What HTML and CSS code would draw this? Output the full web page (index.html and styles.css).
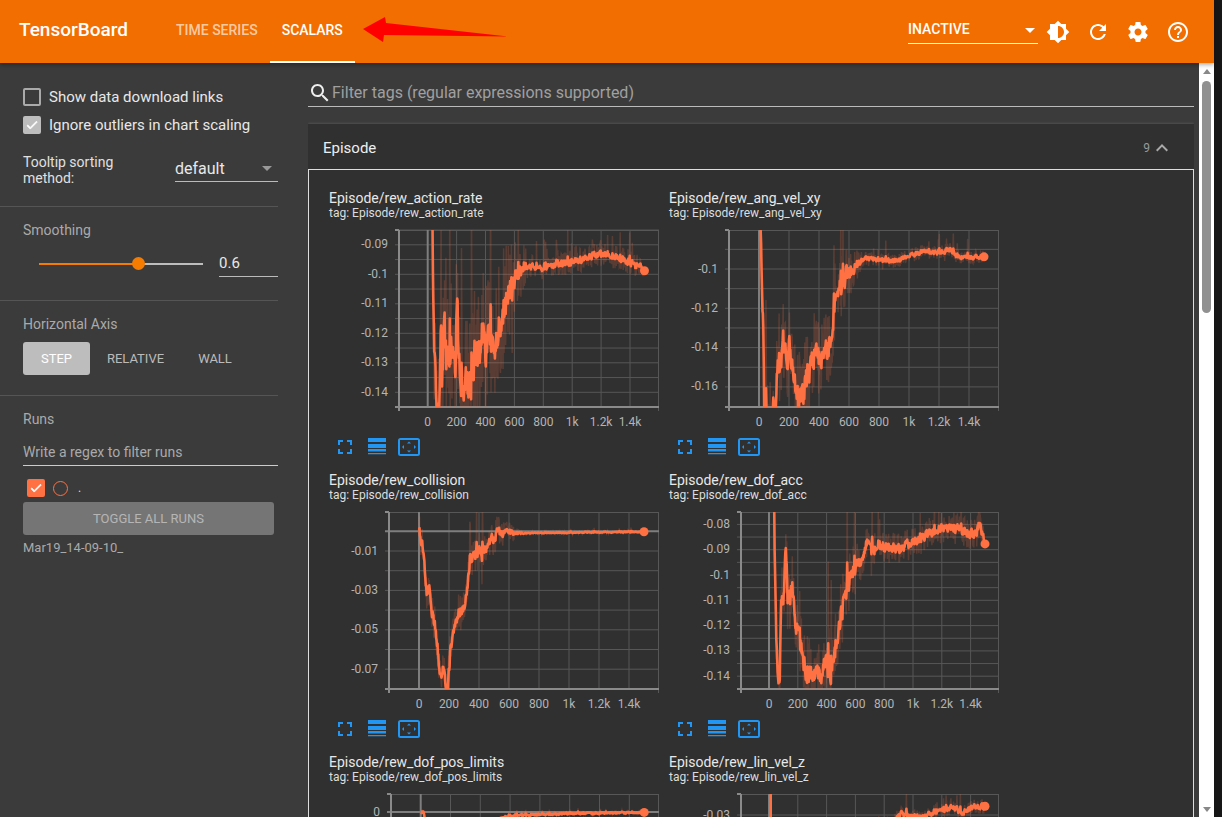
FILE: index.html
```html
<!DOCTYPE html>
<html lang="en">
<head>
<meta charset="utf-8">
<title>TensorBoard</title>
<link rel="stylesheet" href="styles.css">
</head>
<body>
<svg class="defs" width="0" height="0" aria-hidden="true">
  <symbol id="i-full" viewBox="0 0 24 24"><path d="M7 14H5v5h5v-2H7v-3zm-2-4h2V7h3V5H5v5zm12 7h-3v2h5v-5h-2v3zM14 5v2h3v3h2V5h-5z"/></symbol>
  <symbol id="i-lines" viewBox="0 0 18 18"><path d="M0 0h18v4H0zM0 6h18v4H0zM0 11h18v2.4H0zM0 15h18v1.2H0z"/></symbol>
  <symbol id="i-fit" viewBox="0 0 22 18"><path d="M2.5 0h17A2.5 2.5 0 0 1 22 2.5v13a2.5 2.5 0 0 1-2.5 2.5h-17A2.5 2.5 0 0 1 0 15.5v-13A2.5 2.5 0 0 1 2.5 0zM2 2v14h18V2zM11 3.5l2 2H9zM11 14.5l-2-2h4zM4 9l2-2v4zM18 9l-2 2V7z" fill-rule="evenodd"/></symbol>
  <symbol id="i-check" viewBox="0 0 24 24"><path d="M9 16.17L4.83 12l-1.42 1.41L9 19 21 7l-1.41-1.41z" stroke="currentColor" stroke-width="1.3"/></symbol>
</svg>
<div class="window">
  <div class="app">
    <header class="topbar">
      <div class="brand">TensorBoard</div>
      <nav class="tabs">
        <div class="tab">Time Series</div>
        <div class="tab tab-active">Scalars</div>
      </nav>
      <svg class="annotation" width="150" height="30" viewBox="0 0 150 30"><polygon points="0,12 22,0 23,6 145,19.5 21,18 20,25" fill="#fe0000"/></svg>
      <div class="topbar-right">
        <div class="reload-select"><span>INACTIVE</span><i class="caret caret-white"></i></div>
        <div class="top-icon"><svg viewBox="0 0 24 24"><path d="M20 15.31L23.31 12 20 8.69V4h-4.69L12 .69 8.69 4H4v4.69L.69 12 4 15.31V20h4.69L12 23.31 15.31 20H20v-4.69zM12 18V6c3.31 0 6 2.69 6 6s-2.69 6-6 6z"/></svg></div>
        <div class="top-icon"><svg viewBox="0 0 24 24"><path d="M17.65 6.35C16.2 4.9 14.21 4 12 4c-4.42 0-7.99 3.58-7.99 8s3.57 8 7.99 8c3.73 0 6.84-2.55 7.73-6h-2.08c-.82 2.33-3.04 4-5.65 4-3.31 0-6-2.69-6-6s2.69-6 6-6c1.66 0 3.14.69 4.22 1.78L13 11h7V4l-2.35 2.35z"/></svg></div>
        <div class="top-icon"><svg viewBox="0 0 24 24"><path d="M19.43 12.98c.04-.32.07-.64.07-.98s-.03-.66-.07-.98l2.11-1.65c.19-.15.24-.42.12-.64l-2-3.46c-.12-.22-.39-.3-.61-.22l-2.49 1c-.52-.4-1.08-.73-1.69-.98l-.38-2.65C14.46 2.18 14.25 2 14 2h-4c-.25 0-.46.18-.49.42l-.38 2.65c-.61.25-1.17.59-1.69.98l-2.49-1c-.23-.09-.49 0-.61.22l-2 3.46c-.13.22-.07.49.12.64l2.11 1.65c-.04.32-.07.65-.07.98s.03.66.07.98l-2.11 1.65c-.19.15-.24.42-.12.64l2 3.46c.12.22.39.3.61.22l2.49-1c.52.4 1.08.73 1.69.98l.38 2.65c.03.24.24.42.49.42h4c.25 0 .46-.18.49-.42l.38-2.65c.61-.25 1.17-.59 1.69-.98l2.49 1c.23.09.49 0 .61-.22l2-3.46c.12-.22.07-.49-.12-.64l-2.11-1.65zM12 15.5c-1.93 0-3.5-1.57-3.5-3.5s1.57-3.5 3.5-3.5 3.5 1.57 3.5 3.5-1.57 3.5-3.5 3.5z"/></svg></div>
        <div class="top-icon"><svg viewBox="0 0 24 24"><path d="M11 18h2v-2h-2v2zm1-16C6.48 2 2 6.48 2 12s4.48 10 10 10 10-4.48 10-10S17.52 2 12 2zm0 18c-4.41 0-8-3.59-8-8s3.59-8 8-8 8 3.59 8 8-3.59 8-8 8zm0-14c-2.21 0-4 1.79-4 4h2c0-1.1.9-2 2-2s2 .9 2 2c0 2-3 1.75-3 5h2c0-2.25 3-2.5 3-5 0-2.21-1.79-4-4-4z"/></svg></div>
      </div>
    </header>
    <div class="body-row">
      <aside class="sidebar">
        <section class="side-section sec-options">
          <label class="check-row"><span class="box"></span>Show data download links</label>
          <label class="check-row"><span class="box box-on"><svg class="check"><use href="#i-check"/></svg></span>Ignore outliers in chart scaling</label>
          <div class="tooltip-row">
            <div class="tooltip-label">Tooltip sorting method:</div>
            <div class="select"><span>default</span><i class="caret"></i></div>
          </div>
        </section>
        <section class="side-section sec-smoothing">
          <div class="side-title">Smoothing</div>
          <div class="slider-row">
            <div class="slider"><div class="slider-fill"></div><div class="slider-thumb"></div></div>
            <div class="slider-value">0.6</div>
          </div>
        </section>
        <section class="side-section sec-axis">
          <div class="side-title">Horizontal Axis</div>
          <div class="axis-buttons">
            <div class="axis-btn axis-step">Step</div>
            <div class="axis-btn axis-rel">Relative</div>
            <div class="axis-btn axis-wall">Wall</div>
          </div>
        </section>
        <section class="side-section sec-runs">
          <div class="side-title">Runs</div>
          <div class="run-filter">Write a regex to filter runs</div>
          <div class="run-row">
            <span class="box box-run"><svg class="check"><use href="#i-check"/></svg></span>
            <span class="run-circle"></span>
            <span class="run-name">.</span>
          </div>
          <div class="toggle-btn">Toggle all runs</div>
          <div class="run-foot">Mar19_14-09-10_</div>
        </section>
      </aside>
      <main class="content">
        <div class="filter-row">
          <svg class="search" viewBox="0 0 24 24"><path d="M15.5 14h-.79l-.28-.27C15.41 12.59 16 11.11 16 9.5 16 5.91 13.09 3 9.5 3S3 5.91 3 9.5 5.91 16 9.5 16c1.61 0 3.09-.59 4.23-1.57l.27.28v.79l5 4.99L20.49 19l-4.99-5zm-6 0C7.01 14 5 11.99 5 9.5S7.01 5 9.5 5 14 7.01 14 9.5 11.99 14 9.5 14z"/></svg>
          <span>Filter tags (regular expressions supported)</span>
        </div>
        <div class="pane-head">
          <span class="pane-name">Episode</span>
          <span class="pane-count">9</span>
          <svg class="chev" viewBox="0 0 24 24"><path d="M12 8l-6 6 1.41 1.41L12 10.83l4.59 4.58L18 14z"/></svg>
        </div>
        <div class="pane-body">
          <article class="cell">
            <div class="c-title">Episode/rew_action_rate</div>
            <div class="c-tag">tag: Episode/rew_action_rate</div>
            <svg class="plot" data-chart="0"></svg>
            <div class="c-icons"><svg class="ci-full"><use href="#i-full"/></svg><svg class="ci-lines"><use href="#i-lines"/></svg><svg class="ci-fit"><use href="#i-fit"/></svg></div>
          </article>
          <article class="cell">
            <div class="c-title">Episode/rew_ang_vel_xy</div>
            <div class="c-tag">tag: Episode/rew_ang_vel_xy</div>
            <svg class="plot" data-chart="1"></svg>
            <div class="c-icons"><svg class="ci-full"><use href="#i-full"/></svg><svg class="ci-lines"><use href="#i-lines"/></svg><svg class="ci-fit"><use href="#i-fit"/></svg></div>
          </article>
          <article class="cell">
            <div class="c-title">Episode/rew_collision</div>
            <div class="c-tag">tag: Episode/rew_collision</div>
            <svg class="plot" data-chart="2"></svg>
            <div class="c-icons"><svg class="ci-full"><use href="#i-full"/></svg><svg class="ci-lines"><use href="#i-lines"/></svg><svg class="ci-fit"><use href="#i-fit"/></svg></div>
          </article>
          <article class="cell">
            <div class="c-title">Episode/rew_dof_acc</div>
            <div class="c-tag">tag: Episode/rew_dof_acc</div>
            <svg class="plot" data-chart="3"></svg>
            <div class="c-icons"><svg class="ci-full"><use href="#i-full"/></svg><svg class="ci-lines"><use href="#i-lines"/></svg><svg class="ci-fit"><use href="#i-fit"/></svg></div>
          </article>
          <article class="cell">
            <div class="c-title">Episode/rew_dof_pos_limits</div>
            <div class="c-tag">tag: Episode/rew_dof_pos_limits</div>
            <svg class="plot" data-chart="4"></svg>
          </article>
          <article class="cell">
            <div class="c-title">Episode/rew_lin_vel_z</div>
            <div class="c-tag">tag: Episode/rew_lin_vel_z</div>
            <svg class="plot" data-chart="5"></svg>
          </article>
        </div>
      </main>
      <div class="scrollbar">
        <i class="sb-up"></i>
        <div class="sb-thumb"></div>
        <i class="sb-down"></i>
      </div>
    </div>
  </div>
  <div class="edge"></div>
</div>
<script src="charts.js"></script>
</body>
</html>
```
FILE: styles.css
```css
* { box-sizing: border-box; }
html, body { margin: 0; height: 100%; overflow: hidden; }
body { font-family: Roboto, "Liberation Sans", sans-serif; font-size: 14px; color: #e8e8e8; background: #161616; }
.defs { position: absolute; }
.window { display: flex; height: 817px; }
.app { width: 1214px; display: flex; flex-direction: column; }
.edge { width: 8px; background: #161616; }

.topbar { position: relative; z-index: 2; height: 63px; flex: none; display: flex; align-items: stretch; background: #f26e00; color: #fff; box-shadow: 0 2px 4px rgba(0,0,0,.3); padding-right: 16px; }
.brand { padding-left: 19px; width: 164px; font-size: 19px; font-weight: 500; line-height: 60px; }
.tabs { display: flex; }
.tab { padding: 0 12px; font-weight: 500; font-size: 14px; line-height: 61px; text-transform: uppercase; color: rgba(255,255,255,.65); border-bottom: 2px solid transparent; }
.tab-active { color: #fff; border-bottom-color: #fff; }
.annotation { position: absolute; left: 363px; top: 17px; }
.topbar-right { margin-left: auto; display: flex; }
.reload-select { width: 130px; height: 44px; padding-top: 21px; border-bottom: 1px solid #fff; display: flex; justify-content: space-between; font-weight: 500; font-size: 14px; line-height: 16px; }
.top-icon { width: 40px; display: flex; align-items: center; justify-content: center; }
.top-icon svg { width: 24px; height: 24px; fill: #fff; }

.caret { width: 0; height: 0; border-left: 5px solid transparent; border-right: 5px solid transparent; border-top: 5px solid #999; }
.caret-white { border-top-color: #fff; margin: 7px 3px 0 0; }

.body-row { flex: 1; min-height: 0; display: flex; background: #3b3b3b; }
.sidebar { width: 300px; flex: none; padding-right: 22px; }
.side-section { padding-left: 23px; border-bottom: 1px solid #555; }
.side-title { font-size: 14px; line-height: 16px; color: #aaa; }
.sec-runs { border-bottom: 0; padding-top: 15px; }

.sec-options { padding-top: 25px; padding-bottom: 20px; height: 144px; }
.check-row { display: flex; align-items: center; height: 18px; margin-bottom: 10px; font-size: 15px; color: #e8e8e8; }
.box { width: 18px; height: 18px; flex: none; border: 2px solid #aaa; border-radius: 2px; margin-right: 8px; }
.box-on { background: #bdbdbd; border-color: #bdbdbd; color: #fff; }
.check { display: block; width: 14px; height: 14px; fill: currentColor; }
.tooltip-row { display: flex; margin-top: 20px; }
.tooltip-label { width: 100px; margin-right: 52px; font-size: 14px; line-height: 16px; color: #e0e0e0; }
.select { width: 103px; height: 29px; margin-top: -1px; border-bottom: 1px solid #bbb; display: flex; justify-content: space-between; align-items: center; font-size: 16px; padding: 4px 6px 1px 0; }

.sec-smoothing { padding-top: 15px; height: 94px; }
.slider-row { display: flex; margin-top: 14px; }
.slider { position: relative; width: 164px; height: 2px; margin: 11px 16px 0 16px; background: #bdbdbd; }
.slider-fill { width: 99px; height: 2px; background: #f57c00; }
.slider-thumb { position: absolute; left: 93px; top: -6px; width: 13px; height: 13px; border-radius: 50%; background: #f57c00; }
.slider-value { width: 59px; height: 25px; border-bottom: 1px solid #bbb; font-size: 15px; line-height: 23px; }

.sec-axis { padding-top: 15px; height: 95px; }
.axis-buttons { display: flex; margin-top: 10px; height: 33px; font-size: 13px; text-transform: uppercase; line-height: 33px; color: #bbb; }
.axis-btn { text-align: center; }
.axis-step { width: 67px; background: #bdbdbd; color: #fff; border-radius: 3px; }
.axis-rel { width: 91px; }
.axis-wall { width: 68px; }

.run-filter { margin-top: 12px; height: 27px; line-height: 27px; font-size: 14px; color: #aaa; border-bottom: 1px solid #ccc; }
.run-row { display: flex; align-items: center; margin: 13px 0 5px 4px; height: 18px; }
.box-run { background: #ff7043; border-color: #ff7043; color: #fff; margin-right: 8px; }
.run-circle { width: 15px; height: 15px; border: 1.6px solid #ff7043; border-radius: 50%; }
.run-name { margin-left: 10px; font-size: 12px; color: #ddd; }
.toggle-btn { width: 251px; height: 33px; line-height: 33px; background: #757575; border-radius: 3px; text-align: center; font-size: 13px; text-transform: uppercase; color: #b5b5b5; }
.run-foot { margin-top: 5px; font-size: 13px; line-height: 16px; color: #aaa; }

.content { width: 886px; flex: none; margin-left: 8px; margin-right: 5px; overflow: hidden; }
.filter-row { height: 44px; border-bottom: 1px solid #bbb; display: flex; align-items: flex-start; padding-top: 18px; font-size: 16px; line-height: 24px; color: #a0a0a0; }
.search { width: 24px; height: 24px; fill: #eee; flex: none; }
.pane-head { margin-top: 17px; height: 45px; display: flex; align-items: center; background: #303030; padding: 2px 0 0 15px; box-shadow: 0 0 3px rgba(255,255,255,.2); }
.pane-name { flex: 1; font-size: 15px; color: #eee; }
.pane-count { font-size: 12px; color: #999; }
.chev { width: 24px; height: 24px; fill: #aaa; margin-right: 20px; }
.pane-body { display: flex; flex-wrap: wrap; align-content: flex-start; height: 700px; padding: 20px 0 0 20px; background: #303030; border: 1px solid #ddd; border-bottom: 0; }
.cell { width: 340px; height: 282px; }
.c-title { font-size: 14px; line-height: 17px; color: #e8e8e8; }
.c-tag { font-size: 12px; line-height: 13px; color: #ddd; }
.plot { display: block; width: 340px; height: 206px; margin-top: 5px; overflow: hidden; }
.c-icons { display: flex; align-items: center; height: 24px; margin-top: 4px; fill: #2196f3; }
.ci-full { width: 24px; height: 24px; margin-left: 4px; }
.ci-lines { width: 18px; height: 18px; margin-left: 11px; }
.ci-fit { width: 22px; height: 18px; margin-left: 12px; }

.plot text { font-family: Roboto, "Liberation Sans", sans-serif; font-size: 12px; fill: #b4b4b4; }
.grid { stroke: #575757; stroke-width: 1; }
.axis { stroke: #8a8a8a; stroke-width: 2; }
.zero { stroke: #7e7e7e; stroke-width: 2; }
.raw { fill: none; stroke: #ff7043; stroke-opacity: .2; stroke-width: 1.5; }
.smooth { fill: none; stroke: #ff7043; stroke-width: 2.6; stroke-linejoin: round; }
.dot { fill: #ff7043; }

.scrollbar { width: 15px; flex: none; background: #fff; display: flex; flex-direction: column; align-items: center; padding-top: 6px; }
.sb-up, .sb-down { width: 0; height: 0; border-left: 4.5px solid transparent; border-right: 4.5px solid transparent; }
.sb-up { border-bottom: 5px solid #888; }
.sb-down { border-top: 5px solid #888; margin-top: 494px; }
.sb-thumb { width: 9px; height: 232px; margin-top: 7px; border-radius: 5px; background: #919191; }
```
FILE: charts.js
```js
(function () {
  var NS = 'http://www.w3.org/2000/svg';
  var XL = ['0', '200', '400', '600', '800', '1k', '1.2k', '1.4k'];
  var charts = [
    { left: 70, x0: 98.7, dx: 28.9, yv: -0.1, yp: 49.3, per: 2950, major: [-0.09, -0.1, -0.11, -0.12, -0.13, -0.14], lab: ['-0.09', '-0.1', '-0.11', '-0.12', '-0.13', '-0.14'], minor: 0.005, hi: 0.007, lo: 0.0012, rawK: 3.5, seed: 11, xLabels: true,
      keys: [[30,-.06],[35,-.10],[50,-.13],[65,-.15],[80,-.147],[90,-.125],[100,-.135],[115,-.112],[125,-.13],[150,-.128],[170,-.124],[190,-.132],[205,-.108],[215,-.13],[240,-.14],[260,-.137],[290,-.14],[310,-.135],[330,-.125],[350,-.128],[375,-.117],[400,-.125],[430,-.122],[470,-.125],[500,-.116],[540,-.11],[580,-.104],[620,-.1],[660,-.097],[720,-.0975],[800,-.098],[900,-.0965],[1000,-.096],[1100,-.0945],[1200,-.093],[1300,-.094],[1400,-.096],[1440,-.0975],[1460,-.096],[1500,-.0988]] },
    { left: 60, x0: 90, dx: 30, yv: -0.1, yp: 44, per: 1965, major: [-0.1, -0.12, -0.14, -0.16], lab: ['-0.1', '-0.12', '-0.14', '-0.16'], minor: 0.01, hi: 0.008, lo: 0.0012, rawK: 3, seed: 23, xLabels: true,
      keys: [[5,-.06],[15,-.09],[20,-.115],[30,-.13],[35,-.175],[80,-.18],[95,-.165],[110,-.175],[125,-.15],[150,-.145],[165,-.135],[185,-.15],[200,-.135],[215,-.15],[240,-.16],[260,-.168],[290,-.165],[320,-.155],[350,-.145],[400,-.145],[430,-.148],[460,-.14],[490,-.125],[520,-.112],[560,-.105],[620,-.1],[700,-.0945],[800,-.0955],[900,-.096],[980,-.094],[1100,-.091],[1200,-.092],[1270,-.09],[1320,-.0935],[1400,-.094],[1500,-.0938]] },
    { left: 60, x0: 90, dx: 30, yv: -0.01, yp: 44, per: 1970, major: [-0.01, -0.03, -0.05, -0.07], lab: ['-0.01', '-0.03', '-0.05', '-0.07'], minor: 0.01, zeroY: 0, hi: 0.0035, lo: 0.0003, rawK: 3, seed: 37, xLabels: true,
      keys: [[0,0],[20,-.006],[35,-.012],[50,-.03],[70,-.027],[85,-.04],[100,-.045],[120,-.055],[140,-.075],[160,-.07],[190,-.082],[210,-.06],[240,-.05],[260,-.042],[280,-.04],[300,-.04],[320,-.03],[340,-.015],[380,-.012],[420,-.01],[450,-.008],[480,-.004],[520,-.001],[600,-.001],[1500,-.0002]] },
    { left: 72, x0: 100, dx: 28.8, yv: -0.1, yp: 68, per: 2530, major: [-0.08, -0.09, -0.1, -0.11, -0.12, -0.13, -0.14], lab: ['-0.08', '-0.09', '-0.1', '-0.11', '-0.12', '-0.13', '-0.14'], minor: 0.005, hi: 0.005, lo: 0.0022, rawK: 3, seed: 41, xLabels: true,
      keys: [[30,-.06],[40,-.09],[50,-.12],[65,-.145],[75,-.14],[85,-.11],[100,-.115],[115,-.088],[130,-.11],[160,-.105],[185,-.12],[210,-.125],[240,-.135],[280,-.14],[320,-.137],[360,-.14],[400,-.13],[430,-.14],[470,-.125],[520,-.11],[570,-.10],[630,-.095],[680,-.087],[730,-.09],[800,-.089],[900,-.09],[1000,-.087],[1100,-.084],[1200,-.081],[1300,-.0815],[1440,-.084],[1460,-.08],[1500,-.0877]] },
    { left: 62, x0: 91.7, dx: 29.8, yv: 0, yp: 23, per: 2000, major: [0], lab: ['0'], minor: 0.02, zeroY: 0, hi: 0.0005, lo: 0.0005, rawK: 2, seed: 53,
      keys: [[0,0],[20,0],[40,-.01],[60,-.05],[400,-.05],[500,-.004],[600,-.0018],[1000,-.0008],[1500,-.0002]] },
    { left: 72, x0: 100, dx: 28.8, yv: -0.03, yp: 26, per: 2500, major: [-0.03], lab: ['-0.03'], minor: 0.01, hi: 0.0014, lo: 0.0012, rawK: 2.5, seed: 67,
      keys: [[0,.05],[10,.05],[14,-.1],[830,-.035],[910,-.0295],[1050,-.031],[1150,-.0285],[1260,-.027],[1350,-.029],[1430,-.0265],[1500,-.0265]] }
  ];
  var TOP = 5, BOTTOM = 182, RIGHT = 330;

  function el(name, attrs, parent, text) {
    var n = document.createElementNS(NS, name);
    for (var k in attrs) n.setAttribute(k, attrs[k]);
    if (text !== undefined) n.textContent = text;
    parent.appendChild(n);
    return n;
  }
  function rng(seed) {
    var s = seed * 2654435 % 2147483647;
    return function () { s = s * 48271 % 2147483647; return s / 2147483647; };
  }
  function interp(keys, t) {
    for (var i = 1; i < keys.length; i++) {
      if (t <= keys[i][0]) {
        var a = keys[i - 1], b = keys[i];
        return a[1] + (b[1] - a[1]) * (t - a[0]) / (b[0] - a[0]);
      }
    }
    return keys[keys.length - 1][1];
  }

  document.querySelectorAll('.plot').forEach(function (svg) {
    var idx = +svg.getAttribute('data-chart');
    var c = charts[idx];
    var X = function (s) { return c.x0 + s / 200 * c.dx; };
    var Y = function (v) { return c.yp + (c.yv - v) * c.per; };
    var clipId = 'clip' + idx;
    var clip = el('clipPath', { id: clipId }, el('defs', {}, svg));
    el('rect', { x: c.left, y: TOP, width: RIGHT - c.left, height: BOTTOM - TOP }, clip);

    for (var n = -60; n <= 60; n++) {
      var gy = Y(c.yv + n * c.minor);
      if (gy > TOP && gy < BOTTOM) {
        el('line', { x1: c.left - 4, x2: RIGHT, y1: gy, y2: gy, 'class': 'grid' }, svg);
      }
    }
    for (var s = 200; s <= 1400; s += 200) {
      el('line', { x1: X(s), x2: X(s), y1: TOP, y2: BOTTOM, 'class': 'grid' }, svg);
    }
    el('line', { x1: c.left, x2: RIGHT, y1: TOP + .5, y2: TOP + .5, 'class': 'grid' }, svg);
    el('line', { x1: RIGHT - .5, x2: RIGHT - .5, y1: TOP, y2: BOTTOM + 4, 'class': 'grid' }, svg);
    el('line', { x1: X(0), x2: X(0), y1: TOP, y2: BOTTOM, 'class': 'zero' }, svg);
    if (c.zeroY !== undefined) {
      el('line', { x1: c.left - 4, x2: RIGHT, y1: Y(c.zeroY), y2: Y(c.zeroY), 'class': 'zero' }, svg);
    }
    el('line', { x1: c.left, x2: c.left, y1: TOP, y2: BOTTOM + 4, 'class': 'axis' }, svg);
    el('line', { x1: c.left, x2: RIGHT, y1: BOTTOM, y2: BOTTOM, 'class': 'axis' }, svg);
    el('line', { x1: c.left - 4, x2: c.left, y1: TOP, y2: TOP, 'class': 'axis' }, svg);
    el('line', { x1: c.left - 4, x2: c.left, y1: BOTTOM, y2: BOTTOM, 'class': 'axis' }, svg);

    c.major.forEach(function (m, i) {
      el('text', { x: c.left - 11, y: Y(m) + 3.5, 'text-anchor': 'end' }, svg, c.lab[i]);
    });
    if (c.xLabels) {
      XL.forEach(function (t, i) {
        el('text', { x: X(i * 200), y: 201, 'text-anchor': 'middle' }, svg, t);
      });
    }

    var r = rng(c.seed), smooth = [], raw = [];
    var start = c.keys[0][0], prev = 0;
    for (var t = start; t <= 1500; t += 3) {
      var amp = t < 500 ? c.hi : c.lo + (c.hi - c.lo) * Math.max(0, (700 - t) / 200);
      var e = (r() - .5) * 2;
      var spike = r() > .92 ? (r() - .3) * 3 : 0;
      var base = interp(c.keys, t);
      var endFade = t >= 1494 ? 0 : 1;
      prev = prev * .35 + e * .65;
      var sv = base + (prev * 1.2 + spike * .8) * amp * endFade;
      var rv = base + (e * 1.4 + spike * 1.8) * amp * c.rawK * .7 * endFade;
      smooth.push(X(t).toFixed(1) + ',' + Y(sv).toFixed(1));
      raw.push(X(t).toFixed(1) + ',' + Y(rv).toFixed(1));
    }
    var g = el('g', { 'clip-path': 'url(#' + clipId + ')' }, svg);
    el('polyline', { points: raw.join(' '), 'class': 'raw' }, g);
    el('polyline', { points: smooth.join(' '), 'class': 'smooth' }, g);
    var endV = c.keys[c.keys.length - 1][1];
    el('circle', { cx: X(1500), cy: Y(endV), r: 4.5, 'class': 'dot' }, g);
  });
})();
```
